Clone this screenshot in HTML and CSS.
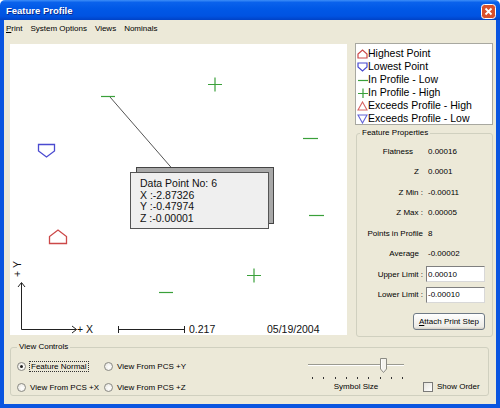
FILE: index.html
```html
<!DOCTYPE html>
<html lang="en">
<head>
    <meta charset="UTF-8">
    <title>Feature Profile</title>
    <link rel="stylesheet" href="styles.css">
</head>
<body>

    <div class="window">
        <div class="titlebar">
            <span class="title">Feature Profile</span>
            <span class="close-btn">
                <svg width="15" height="15" viewBox="0 0 15 15">
                    <rect x="0.5" y="0.5" width="14" height="14" rx="3" fill="#d9502c" stroke="#fff"/>
                    <path d="M4.5 4.5 L10.5 10.5 M10.5 4.5 L4.5 10.5" stroke="#fff" stroke-width="1.8"/>
                </svg>
            </span>
        </div>

        <div class="frame">
            <div class="menubar">
                <span class="menu-item"><u>P</u>rint</span>
                <span class="menu-item">System Options</span>
                <span class="menu-item">Views</span>
                <span class="menu-item">Nominals</span>
            </div>

            <div class="content">
                <div class="main">
                    <!-- profile plot: points are placed by their coordinates -->
                    <div class="plot">
                        <svg class="plot-drawing" width="337" height="291" viewBox="0 0 337 291">
                            <line x1="100" y1="53" x2="166" y2="129" stroke="#555" stroke-width="1"/>
                            <g stroke="#3aa03a" stroke-width="1.2" fill="none">
                                <path d="M91 52.5 H105"/>
                                <path d="M198 40.5 H212 M205 33.5 V47.5"/>
                                <path d="M293 94.5 H308"/>
                                <path d="M299 171.5 H314"/>
                                <path d="M237 231.5 H251 M244 224.5 V238.5"/>
                                <path d="M149 248.5 H163"/>
                            </g>
                            <polygon points="28.5,100.5 44.5,100.5 44.5,107 36.5,113 28.5,107" fill="none" stroke="#4a4ad0" stroke-width="1.3"/>
                            <polygon points="39.5,199.5 56.5,199.5 56.5,192.5 48,186 39.5,192.5" fill="none" stroke="#cc4848" stroke-width="1.3"/>
                            <g stroke="#222" stroke-width="1" fill="none">
                                <path d="M11.5 239 V285.5 H66.5"/>
                                <path d="M8 243 L11.5 238.5 L15 243"/>
                                <path d="M62 282 L66.5 285.5 L62 289"/>
                                <path d="M108.5 285.5 H175"/>
                                <path d="M108.5 282 V289 M174.5 282 V289"/>
                            </g>
                        </svg>

                        <div class="tip-shadow"></div>
                        <div class="tip">
                            <div>Data Point No: 6</div>
                            <div>X :-2.87326</div>
                            <div>Y :-0.47974</div>
                            <div>Z :-0.00001</div>
                        </div>

                        <span class="axis-label axis-y">+ Y</span>
                        <span class="axis-label axis-x">+ X</span>
                        <span class="axis-label scale-label">0.217</span>
                        <span class="axis-label plot-date">05/19/2004</span>
                    </div>

                    <div class="sidebar">
                        <ul class="legend-box">
                            <li>
                                <svg class="legend-icon" width="11" height="10" viewBox="0 0 11 10">
                                    <polygon points="1,9 10,9 10,5 5.5,1 1,5" fill="none" stroke="#cc4848" stroke-width="1.2"/>
                                </svg>Highest Point
                            </li>
                            <li>
                                <svg class="legend-icon" width="11" height="10" viewBox="0 0 11 10">
                                    <polygon points="1,1 10,1 10,5 5.5,9 1,5" fill="none" stroke="#4a4ad0" stroke-width="1.2"/>
                                </svg>Lowest Point
                            </li>
                            <li>
                                <svg class="legend-icon" width="11" height="10" viewBox="0 0 11 10">
                                    <path d="M1 5.5 H11" stroke="#3aa03a" stroke-width="1.2"/>
                                </svg>In Profile - Low
                            </li>
                            <li>
                                <svg class="legend-icon" width="11" height="10" viewBox="0 0 11 10">
                                    <path d="M1 5.5 H11 M6 0.5 V10" stroke="#3aa03a" stroke-width="1.2"/>
                                </svg>In Profile - High
                            </li>
                            <li>
                                <svg class="legend-icon" width="11" height="10" viewBox="0 0 11 10">
                                    <polygon points="1,9 10,9 5.5,1" fill="none" stroke="#d86464" stroke-width="1.1"/>
                                </svg>Exceeds Profile - High
                            </li>
                            <li>
                                <svg class="legend-icon" width="11" height="10" viewBox="0 0 11 10">
                                    <polygon points="1,1 10,1 5.5,9" fill="none" stroke="#6464d8" stroke-width="1.1"/>
                                </svg>Exceeds Profile - Low
                            </li>
                        </ul>

                        <fieldset class="group props">
                            <legend>Feature Properties</legend>
                            <div class="props-grid">
                                <span class="prop-label pad-wide">Flatness</span><span class="prop-value">0.00016</span>
                                <span class="prop-label pad-narrow">Z</span><span class="prop-value">0.0001</span>
                                <span class="prop-label">Z Min :</span><span class="prop-value">-0.00011</span>
                                <span class="prop-label">Z Max :</span><span class="prop-value">0.00005</span>
                                <span class="prop-label">Points in Profile</span><span class="prop-value">8</span>
                                <span class="prop-label pad-narrow">Average</span><span class="prop-value">-0.00002</span>
                                <span class="prop-label">Upper Limit :</span><input class="prop-input" type="text" value="0.00010">
                                <span class="prop-label">Lower Limit :</span><input class="prop-input" type="text" value="-0.00010">
                            </div>
                            <div class="props-actions">
                                <button class="btn"><u>A</u>ttach Print Step</button>
                            </div>
                        </fieldset>
                    </div>
                </div>

                <fieldset class="group view-controls">
                    <legend>View Controls</legend>
                    <div class="view-row">
                        <div class="radio-grid">
                            <label class="radio-option"><span class="radio checked"></span><span class="focused">Feature Normal</span></label>
                            <label class="radio-option"><span class="radio"></span>View From PCS +Y</label>
                            <label class="radio-option"><span class="radio"></span>View From PCS +X</label>
                            <label class="radio-option"><span class="radio"></span>View From PCS +Z</label>
                        </div>

                        <div class="slider">
                            <svg width="104" height="26" viewBox="0 0 104 26">
                                <path d="M4 8.5 H100" stroke="#9a9a90" stroke-width="1"/>
                                <path d="M4 9.5 H100" stroke="#ffffff" stroke-width="1"/>
                                <polygon points="76.5,2.5 82.5,2.5 82.5,13 79.5,16.5 76.5,13" fill="#f4f3ee" stroke="#8c8c84" stroke-width="1"/>
                                <path d="M77.5 3.5 V12.5" stroke="#fff" stroke-width="1"/>
                                <g stroke="#333" stroke-width="1">
                                    <path d="M8.5 21 V23 M19.5 21 V23 M31.5 21 V23 M42.5 21 V23 M53.5 21 V23 M64.5 21 V23 M76.5 21 V23 M87.5 21 V23 M98.5 21 V23"/>
                                </g>
                            </svg>
                            <span class="slider-label">Symbol Size</span>
                        </div>

                        <label class="check-option"><span class="checkbox"></span>Show Order</label>
                    </div>
                </fieldset>
            </div>
        </div>
    </div>

</body>
</html>
```

FILE: styles.css
```css
body {
    margin: 0;
    font-family: 'Liberation Sans', Arial, sans-serif;
    background: #ffffff;
}

.window {
    width: 500px;
    height: 408px;
    display: flex;
    flex-direction: column;
}

.titlebar {
    height: 20px;
    display: flex;
    align-items: center;
    justify-content: space-between;
    padding: 0 4px 0 6px;
    border-radius: 5px 5px 0 0;
    background: linear-gradient(to bottom, #3d8ef8 0%, #0a62ec 12%, #0058e6 45%, #0053e2 80%, #0042c6 100%);
}

.title {
    color: #fff;
    font-weight: bold;
    font-size: 9.5px;
    text-shadow: 1px 1px 0 #0a2a8c;
}

.close-btn {
    display: flex;
    margin-top: 3px;
}

.frame {
    flex: 1;
    display: flex;
    flex-direction: column;
    background-color: #ece9d8;
    border: 4px solid #0a55e0;
    border-top: none;
}

.menubar {
    height: 17px;
    display: flex;
    align-items: center;
    gap: 8px;
    padding-left: 2px;
    font-size: 8px;
    color: #000;
}

.content {
    flex: 1;
    padding: 6px 3px 0 6px;
}

.main {
    height: 294px;
    display: flex;
    gap: 8px;
}

/* plot area */
.plot {
    position: relative;
    width: 337px;
    height: 291px;
    margin-top: 1px;
    background-color: #ffffff;
    overflow: hidden;
}

.plot-drawing {
    position: absolute;
    left: 0;
    top: 0;
}

.tip-shadow {
    position: absolute;
    left: 126px;
    top: 123px;
    width: 138px;
    height: 57px;
    box-sizing: border-box;
    background-color: #a8a8a8;
    border: 1px solid #444;
}

.tip {
    position: absolute;
    left: 120px;
    top: 128px;
    width: 139px;
    height: 57px;
    box-sizing: border-box;
    padding: 5px 0 0 9px;
    background-color: #efefef;
    border: 1px solid #555;
    font-size: 10.5px;
    line-height: 11.6px;
    color: #111;
}

.axis-label {
    position: absolute;
    font-size: 10.5px;
    line-height: 12px;
    color: #111;
    white-space: nowrap;
}

.axis-y {
    left: -1px;
    top: 219px;
    transform: rotate(-90deg);
}

.axis-x {
    left: 67px;
    top: 279px;
}

.scale-label {
    left: 179px;
    top: 279px;
}

.plot-date {
    left: 257px;
    top: 279px;
}

/* right column */
.sidebar {
    width: 138px;
    display: flex;
    flex-direction: column;
}

.legend-box {
    list-style: none;
    margin: 0;
    padding: 3px 0 0 1px;
    height: 82px;
    box-sizing: border-box;
    background-color: #ffffff;
    border: 1px solid #a8a8a0;
    font-size: 10.5px;
    line-height: 13px;
    color: #000;
}

.legend-box li {
    display: flex;
    align-items: center;
    white-space: nowrap;
}

.legend-icon {
    flex-shrink: 0;
}

.group {
    margin: 0;
    padding: 0;
    min-width: 0;
    border: 1px solid #d0d0bf;
    border-radius: 3px;
}

.group legend {
    padding: 0 2px;
    font-size: 8px;
    line-height: 10px;
    color: #000;
}

.props {
    flex: 1;
    margin: 3px 0 0 1px;
    padding: 3px 7px 0 0;
    box-sizing: border-box;
}

.props legend {
    margin-left: 3px;
}

.props-grid {
    display: grid;
    grid-template-columns: 66px 1fr;
    column-gap: 5px;
    grid-auto-rows: 20.5px;
    align-items: center;
    font-size: 8px;
    color: #000;
}

.prop-label {
    text-align: right;
    white-space: nowrap;
}

.prop-label.pad-wide {
    padding-right: 10px;
}

.prop-label.pad-narrow {
    padding-right: 4px;
}

.prop-input {
    width: 59px;
    height: 16px;
    margin-left: -2px;
    box-sizing: border-box;
    padding: 0 1px;
    font-family: inherit;
    font-size: 8px;
    color: #000;
    background: #fff;
    border: 1px solid;
    border-color: #7f7f7f #d8d8d8 #d8d8d8 #7f7f7f;
    outline: none;
}

.props-actions {
    display: flex;
    justify-content: flex-end;
    margin-top: 8px;
}

.btn {
    width: 72px;
    height: 17px;
    padding: 0;
    font-family: inherit;
    font-size: 8px;
    color: #000;
    background: linear-gradient(to bottom, #ffffff, #ecebe6 85%, #d6d0c5);
    border: 1px solid #6f7a86;
    border-radius: 3px;
}

/* bottom controls */
.view-controls {
    width: 479px;
    height: 54px;
    box-sizing: border-box;
    margin-top: 5px;
    padding: 0 0 2px 6px;
}

.view-row {
    display: flex;
    align-items: flex-start;
    font-size: 8px;
    color: #000;
}

.radio-grid {
    display: grid;
    grid-template-columns: 87px 87px;
    grid-auto-rows: 12px;
    row-gap: 9px;
    margin-top: 8px;
}

.radio-option {
    display: flex;
    align-items: center;
    gap: 4px;
    white-space: nowrap;
}

.radio {
    width: 9px;
    height: 9px;
    box-sizing: border-box;
    border-radius: 50%;
    border: 1px solid #8a8a84;
    background: radial-gradient(circle at 60% 60%, #ffffff, #e4e2da);
    display: flex;
    align-items: center;
    justify-content: center;
}

.radio.checked::after {
    content: "";
    width: 3px;
    height: 3px;
    border-radius: 50%;
    background-color: #222;
}

.focused {
    outline: 1px dotted #333;
    padding: 0 1px;
}

.slider {
    display: flex;
    flex-direction: column;
    align-items: center;
    width: 104px;
    margin: 4px 0 0 113px;
}

.slider svg {
    display: block;
}

.slider-label {
    line-height: 10px;
}

.check-option {
    display: flex;
    align-items: center;
    gap: 4px;
    margin: 29px 0 0 15px;
    line-height: 12px;
}

.checkbox {
    width: 10px;
    height: 10px;
    box-sizing: border-box;
    background: linear-gradient(135deg, #e6e4dc, #ffffff);
    border: 1px solid #7a7a78;
}
```
